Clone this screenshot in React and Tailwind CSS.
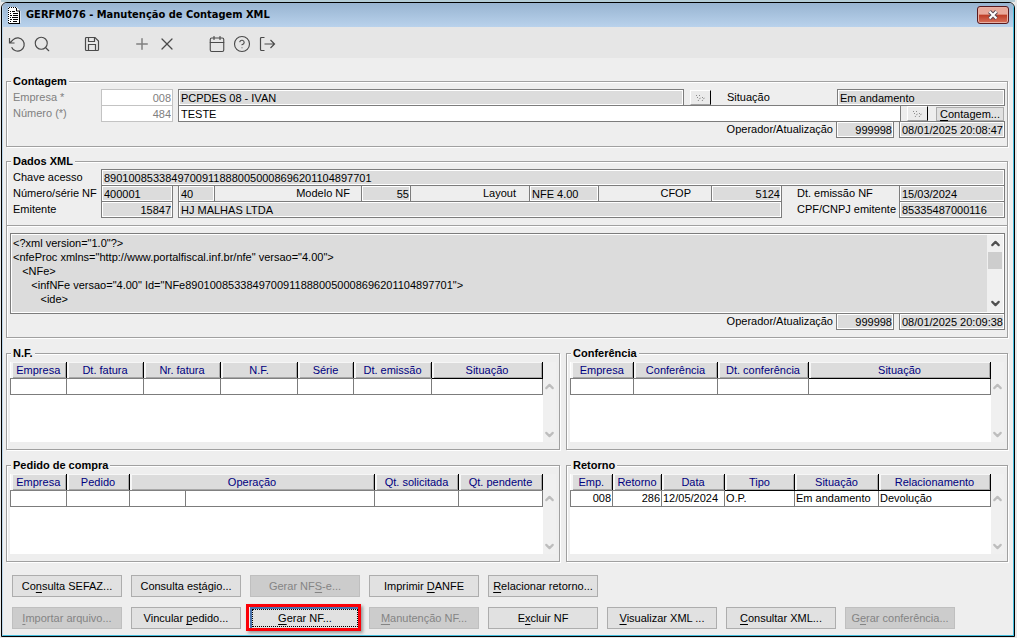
import React from 'react';
import { RotateCcw, Search, Save, Plus, X, Calendar, CircleHelp, ChevronUp, ChevronDown } from 'lucide-react';
import clsx from 'clsx';

const xml = `<?xml version="1.0"?>
<nfeProc xmlns="http://www.portalfiscal.inf.br/nfe" versao="4.00">
   <NFe>
      <infNFe versao="4.00" Id="NFe89010085338497009118880050008696201104897701">
         <ide>`;

const nfColumns = [
  { label: 'Empresa', width: 'w-[56px]' },
  { label: 'Dt. fatura', width: 'w-[77px]' },
  { label: 'Nr. fatura', width: 'w-[77px]' },
  { label: 'N.F.', width: 'w-[77px]' },
  { label: 'Série', width: 'w-[56px]' },
  { label: 'Dt. emissão', width: 'w-[78px]' },
  { label: 'Situação', dark: true },
];

const conferenciaColumns = [
  { label: 'Empresa', width: 'w-[63px]' },
  { label: 'Conferência', width: 'w-[84px]' },
  { label: 'Dt. conferência', width: 'w-[91px]' },
  { label: 'Situação', dark: true },
];

const pedidoColumns = [
  { label: 'Empresa', width: 'w-[56px]' },
  { label: 'Pedido', width: 'w-[63px]' },
  { label: 'Operação', width: 'w-[56px]', span: 2 },
  { label: 'Qt. solicitada', width: 'w-[84px]' },
  { label: 'Qt. pendente', width: 'w-[84px]' },
];

const retornoColumns = [
  { label: 'Emp.', width: 'w-[42px]' },
  { label: 'Retorno', width: 'w-[49px]' },
  { label: 'Data', width: 'w-[63px]' },
  { label: 'Tipo', width: 'w-[70px]', dark: true },
  { label: 'Situação', width: 'w-[84px]', dark: true },
  { label: 'Relacionamento', dark: true },
];

const retornoRow = [
  { value: '008', right: true },
  { value: '286', right: true },
  { value: '12/05/2024' },
  { value: 'O.P.' },
  { value: 'Em andamento' },
  { value: 'Devolução' },
];

// "_" marks the access key of each caption
const actionRows = [
  [
    { label: 'Co_nsulta SEFAZ...' },
    { label: 'Consulta es_tágio...' },
    { label: 'Gerar NF_S-e...', disabled: true },
    { label: 'Imprimir _DANFE' },
    { label: '_Relacionar retorno...' },
  ],
  [
    { label: '_Importar arquivo...', disabled: true },
    { label: 'Vincular _pedido...' },
    { label: '_Gerar NF...', active: true },
    { label: '_Manutenção NF...', disabled: true },
    { label: 'E_xcluir NF' },
    { label: '_Visualizar XML ...' },
    { label: '_Consultar XML...' },
    { label: 'G_erar conferência...', disabled: true },
  ],
];

function Caption({ text }) {
  const [before, rest] = text.split('_');
  return (
    <span className="whitespace-nowrap">
      {before}
      <span className="underline underline-offset-2">{rest[0]}</span>
      {rest.slice(1)}
    </span>
  );
}

function Field({ id, label, value, right, variant = 'locked', className }) {
  return (
    <input
      id={id}
      aria-label={label}
      defaultValue={value}
      readOnly
      className={clsx(
        'h-[17px] min-w-0 border pr-px pl-[2px] outline-none',
        right && 'text-right',
        variant === 'locked' && 'border-[#7c7c7c] bg-[#dcdcdc] shadow-[inset_0_0_0_1px_#fff]',
        variant === 'edit' && 'border-[#7c7c7c] bg-white',
        variant === 'key' && 'border-[#c3c3c3] bg-white text-[#808080]',
        className
      )}
    />
  );
}

function Label({ htmlFor, className, children }) {
  return (
    <label htmlFor={htmlFor} className={clsx('shrink-0 whitespace-nowrap', className)}>
      {children}
    </label>
  );
}

function Row({ className, children }) {
  return <div className={clsx('flex h-4 items-start pl-[6px]', className)}>{children}</div>;
}

function Group({ title, className, children }) {
  return (
    <fieldset className={clsx('min-w-0 border border-[#a0a0a0] shadow-[inset_1px_1px_0_#fff,1px_1px_0_#fff]', className)}>
      <legend className="ml-1 bg-[#eee] px-[2px] text-[11px] leading-[14px] font-bold">{title}</legend>
      {children}
    </fieldset>
  );
}

function LookupButton({ label, className }) {
  return (
    <button
      aria-label={label}
      className={clsx('mt-px flex h-[15px] w-[21px] shrink-0 items-center justify-center border-t border-r border-b border-l border-t-white border-r-black border-b-[#a0a0a0] border-l-white bg-[#ebebeb]', className)}
    >
      <svg width="11" height="8" viewBox="0 0 11 8" fill="none" stroke="#8c8c8c" strokeWidth="1">
        <path d="M1 1.500h1M4 1.500h1M2 3.500h1M7 3.500h1" />
        <path d="M3 7l3-4M7 7l3-4" strokeDasharray="1.500 1" />
      </svg>
    </button>
  );
}

function Audit({ id, date }) {
  return (
    <Row className="justify-end">
      <Label htmlFor={id} className="pr-[3px]">Operador/Atualização</Label>
      <Field id={id} value="999998" right className="w-[58px]" />
      <Field label="Data da atualização" value={date} className="ml-[5px] w-[106px]" />
    </Row>
  );
}

function DataTable({ title, columns, row }) {
  const cells = row || columns.flatMap((c) => Array.from({ length: c.span || 1 }, () => ({ value: '' })));
  return (
    <Group title={title} className="pt-[2px] pb-[7px]">
      <div className="mx-[3px] flex h-20">
        <div className="min-w-0 flex-1 bg-white">
          <table className="w-full table-fixed border-collapse">
            <colgroup>
              {columns.map((c) => (
                <React.Fragment key={c.label}>
                  <col className={c.width} />
                  {c.span && <col />}
                </React.Fragment>
              ))}
            </colgroup>
            <thead>
              <tr className="h-4">
                {columns.map((c) => (
                  <th
                    key={c.label}
                    colSpan={c.span}
                    className={clsx(
                      'h-4 border-r border-b border-r-black bg-[#dcdcdc] px-0 pt-px pb-0 leading-[14px] font-normal whitespace-nowrap text-[#000080] shadow-[inset_2px_1px_0_#f6f6f6,inset_-1px_-1px_0_#a8a8a8]',
                      c.dark ? 'border-b-black' : 'border-b-[#808080]'
                    )}
                  >
                    {c.label}
                  </th>
                ))}
              </tr>
            </thead>
            <tbody>
              <tr>
                {cells.map((cell, i) => (
                  <td
                    key={i}
                    className={clsx(
                      'h-4 border-r border-b border-[#7c7c7c] px-px py-0 leading-[15px] whitespace-nowrap first:border-l',
                      cell.right && 'text-right'
                    )}
                  >
                    {cell.value}
                  </td>
                ))}
              </tr>
            </tbody>
          </table>
        </div>
        <div className="flex w-[13px] flex-col items-center justify-between bg-[#f0f0f0] pt-[18px] pb-px text-[#bdbdbd]">
          <ChevronUp size={13} strokeWidth={4} />
          <ChevronDown size={13} strokeWidth={4} />
        </div>
      </div>
    </Group>
  );
}

function ToolButton({ label, className, children }) {
  return (
    <button aria-label={label} className={clsx('flex h-[25px] w-[25px] items-center justify-center text-[#4a4a4a]', className)}>
      {children}
    </button>
  );
}

function ActionButton({ label, disabled, active }) {
  return (
    <button
      disabled={disabled}
      className={clsx(
        'relative h-[22px] w-[110px] border',
        disabled && 'border-[#bfbfbf] bg-[#cccccc] text-[#848484]',
        !disabled && !active && 'border-[#adadad] bg-[#e1e1e1]',
        active && 'border-[#4a74ad] bg-[#e1e1e1] shadow-[inset_1px_1px_0_#4a74ad]'
      )}
    >
      <Caption text={label} />
      {active && (
        <>
          <span className="absolute inset-px border border-dotted border-black" />
          <span className="absolute -top-1 -right-[2px] -bottom-[3px] -left-[5px] border-3 border-[#fb0007] shadow-[2px_2px_3px_#999]" />
        </>
      )}
    </button>
  );
}

export default function App() {
  return (
    <div className="min-h-screen bg-[#e9e9e9] pr-[2px] pb-px pl-px font-['Liberation_Sans',Arial,sans-serif] text-[11px] leading-4 text-black">
      <div className="h-[2px] bg-[#b4ccd6]" />
      <div className="overflow-hidden rounded-t-md border border-black bg-[#eee]">
        <div className="border-r border-b border-l border-r-[#43bcdc] border-b-[#43bcdc] border-l-[#bcd6ea]">
          {/* Title bar */}
          <header className="flex h-6 items-center bg-linear-to-b from-[#98b4d1] to-[#b9d2ec] pr-1 pl-1">
            <svg width="14" height="17" viewBox="0 0 14 17" className="shrink-0">
              <path d="M1.500 .5h8l3.500 3.500v12H1.500z" fill="#fff" stroke="#fff" />
              <path d="M1.500 1v15M2 .5h8" fill="none" stroke="#000" strokeDasharray="1 1" />
              <path d="M9.500 1v3h3.500M12.500 4v12.500M1.500 16.500H13" fill="none" stroke="#000" />
              <path d="M3 4.500h1M5 4.500h3M3 6.500h1M6 6.500h5M3 8.500h2M6 8.500h5M3 10.500h1M5 10.500h6M3 12.500h2M6 12.500h5M3 14.500h1M6 14.500h4" stroke="#000" />
            </svg>
            <h1 className="ml-[5px] flex-1 font-['DejaVu_Sans_Condensed','Noto_Sans',sans-serif] text-[11px] font-bold">
              GERFM076 - Manutenção de Contagem XML
            </h1>
            <button
              aria-label="Fechar"
              className="flex h-[18px] w-8 items-center justify-center rounded-[3px] border border-[#5a1a1e] bg-linear-to-b from-[#e9a99b] from-45% via-[#bd3c25] via-50% to-[#d6705a] shadow-[inset_0_0_0_1px_#e8b0a4]"
            >
              <svg width="12" height="10" viewBox="0 0 12 10">
                <path d="M2.500 1.500l7 7M9.500 1.500l-7 7" stroke="#5b4a55" strokeWidth="4" />
                <path d="M2.500 1.500l7 7M9.500 1.500l-7 7" stroke="#fff" strokeWidth="2" />
              </svg>
            </button>
          </header>

          {/* Toolbar */}
          <nav className="flex h-[31px] items-center bg-[#e6e6e6] pt-[3px] pl-px" aria-label="Ferramentas">
            <ToolButton label="Desfazer">
              <svg width="18" height="18" viewBox="0 0 18 18" fill="none" stroke="currentColor" strokeWidth="1.200">
                <path d="M1.500 3v5h5M1.800 8l3.400-3.400A6.600 6.600 0 1 1 3.600 12.200" />
              </svg>
            </ToolButton>
            <ToolButton label="Pesquisar"><Search size={18} strokeWidth={1.5} /></ToolButton>
            <ToolButton label="Salvar" className="ml-[25px]">
              <svg width="18" height="18" viewBox="0 0 18 18" fill="none" stroke="currentColor" strokeWidth="1.200">
                <path d="M3.500 2.500h8.500l3.500 3.500v8.500a1 1 0 0 1-1 1h-11a1 1 0 0 1-1-1v-11a1 1 0 0 1 1-1z" />
                <path d="M5.500 15.500v-6h7v6M5.500 2.500v4h6v-4" />
              </svg>
            </ToolButton>
            <ToolButton label="Incluir" className="ml-[25px] text-[#808080]"><Plus size={18} strokeWidth={2} /></ToolButton>
            <ToolButton label="Excluir"><X size={20} strokeWidth={1.5} /></ToolButton>
            <ToolButton label="Calendário" className="ml-[25px]"><Calendar size={18} strokeWidth={1.5} /></ToolButton>
            <ToolButton label="Ajuda"><CircleHelp size={18} strokeWidth={1.5} /></ToolButton>
            <ToolButton label="Sair">
              <svg width="18" height="18" viewBox="0 0 18 18" fill="none" stroke="currentColor" strokeWidth="1.200">
                <path d="M6.500 2.500h-3a1 1 0 0 0-1 1v11a1 1 0 0 0 1 1h3M6.500 9h10M12.500 5l4 4-4 4" />
              </svg>
            </ToolButton>
          </nav>

          <main className="pt-4 pr-[5px] pb-[6px] pl-[3px]">
            <Group title="Contagem" className="pt-px pr-[2px] pb-[9px]">
              <Row>
                <Label htmlFor="empresa" className="w-[88px] text-[#808080]">Empresa *</Label>
                <Field id="empresa" value="008" right variant="key" className="w-[72px]" />
                <Field label="Nome da empresa" value="PCPDES 08 - IVAN" className="ml-[5px] flex-1" />
                <LookupButton label="Buscar empresa" className="ml-[6px]" />
                <Label htmlFor="situacao" className="ml-4 w-[110px]">Situação</Label>
                <Field id="situacao" value="Em andamento" className="w-[168px]" />
              </Row>
              <Row>
                <Label htmlFor="numero" className="w-[88px] text-[#808080]">Número (*)</Label>
                <Field id="numero" value="484" right variant="key" className="w-[72px]" />
                <Field label="Descrição" value="TESTE" variant="edit" className="ml-[5px] flex-1" />
                <LookupButton label="Buscar contagem" className="ml-[6px]" />
                <button className="mt-[2px] mr-px ml-2 h-[14px] w-[68px] border border-[#adadad] bg-[#e1e1e1] leading-3">
                  <Caption text="_Contagem..." />
                </button>
              </Row>
              <Audit id="operador-contagem" date="08/01/2025 20:08:47" />
            </Group>

            <Group title="Dados XML" className="mt-[7px] pt-px pb-2">
              <div className="pr-[2px]">
                <Row>
                  <Label htmlFor="chave" className="w-[88px]">Chave acesso</Label>
                  <Field id="chave" value="89010085338497009118880050008696201104897701" className="flex-1" />
                </Row>
                <Row>
                  <Label htmlFor="nf" className="w-[88px]">Número/série NF</Label>
                  <Field id="nf" value="400001" className="w-[72px]" />
                  <Field label="Série" value="40" className="ml-[5px] w-[37px]" />
                  <Label htmlFor="modelo" className="grow basis-[146px] pr-[11px] text-right">Modelo NF</Label>
                  <Field id="modelo" value="55" right className="w-[50px]" />
                  <Label htmlFor="layout" className="grow basis-[118px] pr-[13px] text-right">Layout</Label>
                  <Field id="layout" value="NFE 4.00" className="w-[70px]" />
                  <Label htmlFor="cfop" className="grow basis-[112px] pr-[20px] text-right">CFOP</Label>
                  <Field id="cfop" value="5124" right className="w-[71px]" />
                  <Label htmlFor="emissao" className="ml-[15px] w-[102px]">Dt. emissão NF</Label>
                  <Field id="emissao" value="15/03/2024" className="w-[106px]" />
                </Row>
                <Row>
                  <Label htmlFor="emitente" className="w-[88px]">Emitente</Label>
                  <Field id="emitente" value="15847" right className="w-[72px]" />
                  <Field label="Nome do emitente" value="HJ MALHAS LTDA" className="ml-[5px] flex-1" />
                  <Label htmlFor="cnpj" className="ml-[15px] w-[102px]">CPF/CNPJ emitente</Label>
                  <Field id="cnpj" value="85335487000116" className="w-[106px]" />
                </Row>
              </div>

              <hr className="mt-2 border-t border-[#a0a0a0] shadow-[0_1px_0_#fff]" />

              <div className="pt-[7px] pr-[2px] pl-[3px]">
                <div className="-mb-px flex h-[81px] border border-[#7c7c7c] bg-[#dcdcdc] p-px shadow-[inset_0_0_0_1px_#fff]">
                  <textarea
                    aria-label="Conteúdo do XML"
                    defaultValue={xml}
                    readOnly
                    wrap="off"
                    className="flex-1 resize-none overflow-hidden px-px py-px leading-[14px] outline-none"
                  />
                  <div className="flex w-4 flex-col items-center bg-[#f0f0f0] py-[2px] text-[#505050]">
                    <ChevronUp size={13} strokeWidth={4} />
                    <div className="mt-[2px] h-[17px] w-[14px] bg-[#cdcdcd]" />
                    <ChevronDown size={13} strokeWidth={4} className="mt-auto" />
                  </div>
                </div>
                <Audit id="operador-xml" date="08/01/2025 20:09:38" />
              </div>
            </Group>

            <div className="mt-2 grid grid-cols-[554fr_442fr] gap-x-[6px] gap-y-2">
              <DataTable title="N.F." columns={nfColumns} />
              <DataTable title="Conferência" columns={conferenciaColumns} />
              <DataTable title="Pedido de compra" columns={pedidoColumns} />
              <DataTable title="Retorno" columns={retornoColumns} row={retornoRow} />
            </div>

            <div className="mt-[13px] flex flex-col gap-[10px] pl-[6px]">
              {actionRows.map((actions, i) => (
                <div key={i} className="flex flex-wrap gap-[9px]">
                  {actions.map((action) => (
                    <ActionButton key={action.label} {...action} />
                  ))}
                </div>
              ))}
            </div>
          </main>
        </div>
      </div>
    </div>
  );
}
